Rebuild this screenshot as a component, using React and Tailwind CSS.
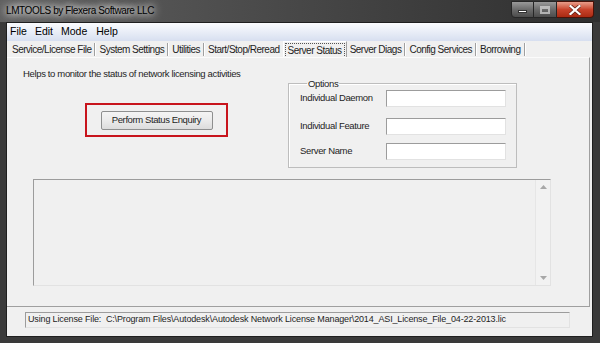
import React from "react";

const tabs = [
  "Service/License File",
  "System Settings",
  "Utilities",
  "Start/Stop/Reread",
  "Server Status",
  "Server Diags",
  "Config Services",
  "Borrowing",
];

const sunken =
  "border border-t-[#9c9c9c] border-l-[#9c9c9c] border-r-[#e2e2e2] border-b-[#e2e2e2]";

function TitleButtons() {
  return (
    <div className="ml-auto mr-[6px] mt-[1px] flex">
      <div className="w-[23px] h-[17px] rounded-bl-[4px] border border-[#262626] bg-gradient-to-b from-[#9a9a9a] via-[#6b6b6b] to-[#4c4c4c] flex items-end justify-center pb-[4px]">
        <div className="w-[9px] h-[3px] bg-white border border-[#333]" />
      </div>
      <div className="w-[23px] h-[17px] border-y border-r border-[#262626] bg-gradient-to-b from-[#9a9a9a] via-[#6b6b6b] to-[#4c4c4c] flex items-center justify-center">
        <div className="w-[10px] h-[8px] border-2 border-t-[3px] border-[#d8d8d8] opacity-70" />
      </div>
      <div className="w-[37px] h-[17px] rounded-br-[4px] border-y border-r border-[#4a1208] bg-gradient-to-b from-[#e79d8a] via-[#c8432b] to-[#a92a12] flex items-center justify-center">
        <svg width="12" height="10" viewBox="0 0 12 10">
          <path d="M1.5 1 L10.5 9 M10.5 1 L1.5 9" stroke="#5a1b10" strokeWidth="3.6" strokeLinecap="square" />
          <path d="M1.5 1 L10.5 9 M10.5 1 L1.5 9" stroke="#ffffff" strokeWidth="2.2" strokeLinecap="square" />
        </svg>
      </div>
    </div>
  );
}

function Field({ label }) {
  return (
    <div className="flex items-center h-[17px]">
      <span className="w-[86px]">{label}</span>
      <div className={`w-[120px] h-[17px] bg-white ${sunken}`} />
    </div>
  );
}

export default function App() {
  return (
    <div className="w-[600px] h-[343px] flex flex-col overflow-hidden bg-[#3a3a3a] font-['Liberation_Sans',Arial,sans-serif] text-[10px] text-[#1e1e1e]">
      {/* title bar */}
      <div className="h-[22px] shrink-0 flex items-start bg-gradient-to-r from-[#616161] via-[#474747] to-[#2f2f2f]">
        <span className="ml-[6px] mt-[4px] text-[10px] tracking-[-0.4px] leading-[14px] text-black [text-shadow:0_0_6px_#ffffff,0_0_10px_#ffffff,0_0_14px_rgba(255,255,255,0.6)]">
          LMTOOLS by Flexera Software LLC
        </span>
        <TitleButtons />
      </div>

      {/* client area */}
      <div className="flex-1 ml-[6px] mr-[7px] mb-[6px] flex flex-col bg-[#f0f0f0] border border-[#1f1f1f]">
        {/* menu */}
        <div className="h-[18px] shrink-0 flex items-center pl-[3px] text-[10.5px] text-black bg-gradient-to-b from-[#fbfcfe] to-[#d7dff0]">
          <span>File</span>
          <span className="ml-[8px]">Edit</span>
          <span className="ml-[8px]">Mode</span>
          <span className="ml-[9px]">Help</span>
        </div>

        {/* tabs */}
        <div className="h-[16px] shrink-0 flex items-center pl-[2px] tracking-[-0.5px]">
          {tabs.map((t) => (
            <React.Fragment key={t}>
              {t === "Server Status" ? (
                <div className="h-[17px] mt-[1px] px-[1px] flex items-center border-t border-l border-white border-r border-b-0 border-r-[#a0a0a0]">
                  <span className="px-[2px] leading-[13px] border border-dotted border-[#555]">{t}</span>
                </div>
              ) : (
                <span className="px-[3px]">{t}</span>
              )}
              {t !== "Server Status" && t !== "Start/Stop/Reread" && (
                <div className="w-[2px] h-[13px] border-l border-[#a0a0a0] border-r border-r-white" />
              )}
            </React.Fragment>
          ))}
        </div>

        {/* tab panel */}
        <div className="flex-1 mr-[2px] flex flex-col pt-[9px] border-t border-t-[#fbfbfb] border-r border-r-[#9f9f9f] border-b border-b-[#9f9f9f]">
          <div className="flex">
            <div className="w-[281px] pl-[16px] flex flex-col">
              <p className="leading-[13px] text-[9.5px] tracking-[-0.35px]">
                Helps to monitor the status of network licensing activities
              </p>
              <div className="mt-[23px] ml-[62px] w-[143px] h-[34px] border-2 border-[#c8141c] flex items-center justify-center">
                <button className="w-[112px] h-[19px] rounded-[2px] border border-[#8e8f8f] bg-gradient-to-b from-[#f4f4f4] via-[#ebebeb] to-[#dcdcdc] text-[9.5px] tracking-[-0.4px] text-[#1e1e1e]">
                  Perform Status Enquiry
                </button>
              </div>
            </div>
            <fieldset className="mt-[10px] w-[229px] h-[91px] border border-[#bdbdbd] shadow-[inset_1px_1px_0_#ffffff] pl-[11px] text-[9.5px] tracking-[-0.35px]">
              <legend className="ml-[7px] px-[1px] leading-[13px]">Options</legend>
              <Field label="Individual Daemon" />
              <div className="mt-[11px]">
                <Field label="Individual Feature" />
              </div>
              <div className="mt-[8px]">
                <Field label="Server Name" />
              </div>
            </fieldset>
          </div>

          {/* output area */}
          <div className={`mt-[11px] ml-[26px] w-[518px] h-[107px] flex justify-end bg-[#f0f0f0] ${sunken}`}>
            <div className="w-[15px] h-full flex flex-col items-center justify-between py-[5px] border-l border-[#e6e6e6] bg-[#f2f2f2]">
              <svg width="7" height="4" viewBox="0 0 7 4">
                <path d="M0 4 L3.5 0 L7 4 Z" fill="#a8a8a8" />
              </svg>
              <svg width="7" height="4" viewBox="0 0 7 4">
                <path d="M0 0 L3.5 4 L7 0 Z" fill="#a8a8a8" />
              </svg>
            </div>
          </div>
        </div>

        {/* status */}
        <div className="h-[29px] shrink-0 pt-[5px] pl-[18px]">
          <div className={`w-[545px] h-[16px] flex items-center pl-[2px] text-[9px] tracking-[-0.15px] whitespace-pre ${sunken}`}>
            {"Using License File:  C:\\Program Files\\Autodesk\\Autodesk Network License Manager\\2014_ASI_License_File_04-22-2013.lic"}
          </div>
        </div>
      </div>
    </div>
  );
}
